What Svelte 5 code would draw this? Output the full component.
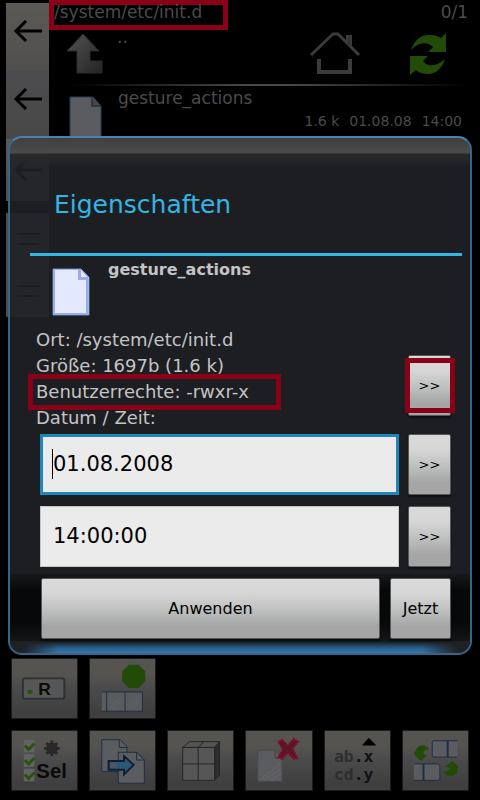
<script lang="ts">
	let date = '01.08.2008';
	let time = '14:00:00';

	const path = '/system/etc/init.d';
	const file = { name: 'gesture_actions', size: '1.6 k', date: '01.08.08', time: '14:00' };

	const sideButtons = ['back', 'back', 'back', 'menu', 'menu'];
	const checks = [9, 24, 39];
	const spokes = [0, 45, 90, 135];
</script>

<div class="app">
	<div class="top">
		<nav class="side">
			{#each sideButtons as kind}
				<button class="side-btn {kind}" aria-label={kind}>
					{#if kind === 'back'}
						<svg width="30" height="24" viewBox="0 0 30 24" fill="none" stroke="currentColor" stroke-width="3">
							<path d="M29 12H3M13 2L3 12l10 10"></path>
						</svg>
					{:else}
						<svg width="30" height="24" viewBox="0 0 30 24" fill="none" stroke="currentColor" stroke-width="2">
							<path d="M4 7h22M4 17h22"></path>
						</svg>
					{/if}
				</button>
			{/each}
		</nav>

		<main class="browser">
			<header class="status">
				<span class="path marked">{path}</span>
				<span class="count">0/1</span>
			</header>

			<div class="tools">
				<button class="plain up" aria-label="Nach oben">
					<svg width="38" height="42" viewBox="0 0 38 42">
						<defs>
							<linearGradient id="upFill" x1="0" y1="0" x2="1" y2="1">
								<stop offset="0" stop-color="#535353"></stop>
								<stop offset="1" stop-color="#242424"></stop>
							</linearGradient>
						</defs>
						<path d="M17 1L33 18H24V28H36V40H11V18H1Z" fill="url(#upFill)" stroke="#2c2c2c"></path>
					</svg>
					<span>..</span>
				</button>
				<button class="plain" aria-label="Home">
					<svg width="52" height="46" viewBox="0 0 52 46" fill="none" stroke="#3b3b3b" stroke-width="3">
						<path d="M2 24L24 3h5L50 24"></path>
						<path d="M38 12V5h4v12" fill="#333" stroke-width="2"></path>
						<path d="M10 28V41H41V28" stroke-width="4"></path>
					</svg>
				</button>
				<button class="plain" aria-label="Aktualisieren">
					<svg width="38" height="44" viewBox="0 0 38 44" fill="#234b08">
						<path d="M2 18C5 8 13 2 21 3C27 3 30 5 32 6L37 1V20H19L24 15C18 9 9 10 2 18Z"></path>
						<path d="M36 27C33 37 25 43 18 42C12 42 8 39 7 38L1 43V24H19L14 29C19 36 28 34 36 27Z"></path>
					</svg>
				</button>
			</div>

			<div class="rule"></div>

			<div class="entry">
				<svg width="34" height="50" viewBox="0 0 34 50">
					<path d="M1 1H24L32 10V49H1Z" fill="#5b5c60" stroke="#263d52"></path>
					<path d="M23 1V10H32" fill="#444549" stroke="#35363a" stroke-width="2"></path>
				</svg>
				<div class="entry-text">
					<span class="entry-name">{file.name}</span>
					<span class="entry-meta">
						<span>{file.size}</span>
						<span>{file.date}</span>
						<span>{file.time}</span>
					</span>
				</div>
			</div>
		</main>
	</div>

	<div class="actions">
		<button class="tile" aria-label="R">
			<svg viewBox="0 0 67 61">
				<rect x="11" y="20" width="43" height="21" rx="2" fill="#565656" stroke="#303030" stroke-width="2"></rect>
				<path d="M11 36V41H54" fill="none" stroke="#20344c"></path>
				<rect x="16" y="32" width="5" height="4" fill="#2a520c"></rect>
				<text x="27" y="37" class="letter">R</text>
			</svg>
		</button>
		<button class="tile" aria-label="Stopp">
			<svg viewBox="0 0 67 61">
				<path d="M40 6h10l7 7v10l-7 7H40l-7-7V13Z" fill="#234b08"></path>
				<path d="M12 34H54V54H12" fill="#5a5b5f" stroke="#1d2d42"></path>
				<path d="M17 34V54M36 34V54" stroke="#1d2d42"></path>
				<path d="M22 49l9-9M25 51l8-8M41 49l9-9M44 51l8-8" stroke="#747474" stroke-dasharray="1 2"></path>
			</svg>
		</button>
		<span class="break"></span>
		<button class="tile" aria-label="Auswahl">
			<svg viewBox="0 0 67 61">
				{#each checks as y}
					<rect x="12" {y} width="11" height="13" fill="#626262"></rect>
					<path d="M13 {y + 6}l4 4 6-6" fill="none" stroke="#2a520c" stroke-width="3"></path>
				{/each}
				<circle cx="41" cy="18" r="6" fill="#292929"></circle>
				{#each spokes as angle}
					<path d="M33 18H49" stroke="#292929" stroke-width="3" transform="rotate({angle} 41 18)"></path>
				{/each}
				<text x="25" y="49" class="sel">Sel</text>
			</svg>
		</button>
		<button class="tile" aria-label="Kopieren">
			<svg viewBox="0 0 67 61">
				<path d="M12 9H31L38 16V42H12Z" fill="#5b5c60" stroke="#1d2d42"></path>
				<path d="M30 9V17H38" fill="none" stroke="#1d2d42"></path>
				<path d="M29 22H48L56 30V54H29Z" fill="#5b5c60" stroke="#1d2d42"></path>
				<path d="M48 22V30H56" fill="none" stroke="#1d2d42"></path>
				<path d="M19 31H35V26L45 35L35 45V40H19Z" fill="#2c5876" stroke="#111f30" stroke-width="2"></path>
				<path d="M21 33h7v5h-7Z" fill="#50585f"></path>
			</svg>
		</button>
		<button class="tile" aria-label="Packen">
			<svg viewBox="0 0 67 61" stroke="#252525" stroke-linejoin="round">
				<path d="M48 17L53 11V46L48 51Z" fill="#2e2e2e"></path>
				<path d="M15 17L22 11H53L48 17Z" fill="#545454"></path>
				<path d="M15 17H48V51H15Z" fill="#565656"></path>
				<path d="M15 34H48M31 51V17L37 11M48 34l5-5" fill="none"></path>
			</svg>
		</button>
		<button class="tile" aria-label="Löschen">
			<svg viewBox="0 0 67 61">
				<path d="M12 20H30L37 28V52H12Z" fill="#5b5c60" stroke="#4b4b4d"></path>
				<path d="M30 20V28H37" fill="none" stroke="#404043"></path>
				<path d="M15 50L35 34M19 51L36 39M25 51L36 44" stroke="#777774" stroke-dasharray="1 2"></path>
				<path
					d="M33 11L37 9L43 15L49 8L54 11L48 18L53 28L49 29L43 23L37 29L33 27L38 19Z"
					fill="#5d1427"
					stroke="#80102a"
					stroke-width="2"
					stroke-dasharray="2 1"
				></path>
			</svg>
		</button>
		<button class="tile" aria-label="Umbenennen">
			<svg viewBox="0 0 67 61">
				<path d="M45 7L53 15H38Z" fill="#000"></path>
				<text x="9" y="32" class="rename">ab<tspan class="ext">.x</tspan></text>
				<text x="9" y="51" class="rename">cd<tspan class="ext">.y</tspan></text>
			</svg>
		</button>
		<button class="tile" aria-label="Tauschen">
			<svg viewBox="0 0 67 61">
				<path d="M56 10H31l-1 2V25l1 2H56" fill="#5b5c60" stroke="#1d2d42"></path>
				<path d="M46 10V27" stroke="#1d2d42" stroke-width="2"></path>
				<path d="M11 34H36l2 2V49l-2 2H11" fill="#5b5c60" stroke="#1d2d42"></path>
				<path d="M21 34V51" stroke="#1d2d42" stroke-width="2"></path>
				<path d="M27 20C25 14 18 13 14 18L12 22L11 21L12 25L18 31L25 25L21 24C21 20 24 18 27 20Z" fill="#234b08"></path>
				<path d="M41 41C43 48 52 48 56 43V38H58L51 31L43 37L48 38C48 41 44 43 41 41Z" fill="#234b08"></path>
			</svg>
		</button>
	</div>

	<div class="overlay">
		<form class="dialog" aria-labelledby="title" on:submit|preventDefault>
			<h1 id="title">Eigenschaften</h1>

			<div class="file">
				<svg width="38" height="48" viewBox="0 0 38 48">
					<path d="M1 1H29L37 9V47H1Z" fill="#e4e9ff" stroke="#5f88c0"></path>
					<path d="M2 2V46H35V9" fill="none" stroke="#9dabe6" stroke-width="2"></path>
					<path d="M26 1V12H36V8L29 1Z" fill="#9dabe6"></path>
					<path d="M29 2V9H35Z" fill="#e4e9ff"></path>
				</svg>
				<strong>{file.name}</strong>
			</div>

			<div class="info">
				<div class="lines">
					<p>Ort: {path}</p>
					<p>Größe: 1697b (1.6 k)</p>
					<p class="rights">Benutzerrechte: -rwxr-x</p>
					<p><label for="date">Datum / Zeit:</label></p>
				</div>
				<div class="rights-btn">
					<button type="button" class="btn small">&gt;&gt;</button>
				</div>
			</div>

			<div class="row">
				<div class="field">
					<input id="date" class="active" type="text" bind:value={date} />
					<span class="caret"></span>
				</div>
				<button type="button" class="btn small">&gt;&gt;</button>
			</div>
			<div class="row">
				<div class="field">
					<input type="text" aria-label="Zeit" bind:value={time} />
				</div>
				<button type="button" class="btn small">&gt;&gt;</button>
			</div>

			<div class="footer">
				<button type="submit" class="btn apply">Anwenden</button>
				<button type="button" class="btn now">Jetzt</button>
			</div>
		</form>
	</div>
</div>

<style>
	:global(body) {
		margin: 0;
		background: #000;
	}

	* {
		box-sizing: border-box;
	}

	button,
	input {
		font-family: inherit;
		margin: 0;
	}

	.app {
		position: relative;
		display: flex;
		flex-direction: column;
		justify-content: space-between;
		min-height: 100vh;
		background: #000;
		color: #4b4b4b;
		font-family: 'DejaVu Sans', Verdana, sans-serif;
		font-size: 17px;
	}

	.top {
		display: flex;
	}

	.side {
		display: flex;
		flex-direction: column;
		width: 43px;
		margin: 3px 0 0 6px;
	}

	.side-btn {
		display: flex;
		align-items: center;
		justify-content: center;
		height: 68px;
		padding: 0 0 12px;
		border: 0;
		background: linear-gradient(#5a5956, #504f4d);
		color: #000;
	}

	.side-btn:nth-child(2) {
		background: linear-gradient(#4c4c4e, #484848);
	}

	.side-btn:nth-child(3) {
		height: 62px;
		padding: 0;
		margin-bottom: 12px;
	}

	.side-btn.menu {
		height: 52px;
		padding: 0;
		background: #4c4c4c;
	}

	.browser {
		flex: 1;
		min-width: 0;
	}

	.status {
		display: flex;
		justify-content: space-between;
		padding-right: 12px;
		line-height: 24px;
	}

	.marked {
		height: 30px;
		padding-right: 21px;
		border: 5px solid #8a0016;
		line-height: 14px;
	}

	.tools {
		display: flex;
		align-items: center;
		justify-content: space-between;
		gap: 48px;
		height: 54px;
		padding: 0 33px 6px 17px;
	}

	.plain {
		display: flex;
		padding: 0;
		border: 0;
		background: none;
		color: inherit;
		font-size: 17px;
	}

	.plain.up {
		flex: 1;
		gap: 13px;
		line-height: 8px;
	}

	.rule {
		height: 2px;
		margin: 0 12px 0 20px;
		background: linear-gradient(90deg, #000, #4a4a4a 45%, #4a4a4a 55%, #000);
	}

	.entry {
		display: flex;
		gap: 15px;
		padding: 10px 18px 0 20px;
	}

	.entry-text {
		display: flex;
		flex: 1;
		flex-direction: column;
	}

	.entry-name {
		margin-top: -10px;
		line-height: 24px;
	}

	.entry-meta {
		display: flex;
		justify-content: flex-end;
		gap: 10px;
		font-size: 14px;
		line-height: 22px;
	}

	.actions {
		display: grid;
		grid-template-columns: repeat(6, 1fr);
		gap: 11px;
		padding: 0 11px 9px;
	}

	.break {
		grid-column: span 4;
	}

	.tile {
		height: 61px;
		padding: 0;
		border: 1px solid #1c1c1c;
		background: linear-gradient(#555450 0%, #555450 25%, #4a4a4c 50%, #3f3f3f 90%);
	}

	.tile svg {
		display: block;
		width: 100%;
		height: 100%;
	}

	.letter {
		font: bold 18px 'Liberation Sans', sans-serif;
		fill: #0a0a0a;
	}

	.sel {
		font: bold 21px 'Liberation Sans', sans-serif;
		fill: #0a0a0a;
	}

	.rename {
		font: bold 17px 'DejaVu Sans Mono', monospace;
		fill: #2e2e2e;
	}

	.ext {
		fill: #101214;
	}

	.overlay {
		position: absolute;
		inset: 0;
		display: flex;
		align-items: center;
		padding: 0 8px 10px;
	}

	.dialog {
		flex: 1;
		min-width: 0;
		border: 2px solid #36658c;
		border-top-color: #4c80b0;
		border-radius: 14px;
		background:
			linear-gradient(#424242e6, #4c4c4cf2 13px, #4c4c4cf2 15px, #2b2b2bdd 16px, #26272aaa 24px, #1e1f2300 29px),
			#202126e6;
		color: #c4c4c4;
		font-size: 18px;
		overflow: hidden;
	}

	h1 {
		margin: 0 8px 0 20px;
		padding: 52px 0 33px 24px;
		border-bottom: 3px solid #33b5e5;
		color: #33b5e5;
		font-size: 25px;
		font-weight: normal;
		line-height: 30px;
	}

	.file {
		display: flex;
		gap: 18px;
		padding: 12px 20px 11px 42px;
	}

	.file strong {
		margin-top: -10px;
		font-size: 16px;
		line-height: 24px;
	}

	.info {
		display: flex;
		align-items: flex-end;
		justify-content: space-between;
		margin-bottom: 3px;
		padding: 0 15px 0 18px;
	}

	.lines p {
		margin: 0;
		padding: 0 8px;
		line-height: 26px;
	}

	.lines .rights {
		margin: -5px 0;
		padding: 0 27px 0 3px;
		border: 5px solid #8a0016;
	}

	.rights-btn {
		position: relative;
		display: flex;
		padding: 0 4px 15px 0;
	}

	.rights-btn::after {
		content: '';
		position: absolute;
		inset: 3px 0 18px -3px;
		border: 5px solid #8a0016;
	}

	.row {
		display: flex;
		gap: 9px;
		padding: 0 19px 11px 30px;
	}

	.field {
		position: relative;
		flex: 1;
		min-width: 0;
	}

	input {
		display: block;
		width: 100%;
		height: 61px;
		padding: 0 12px;
		border: 1px solid #c6c6c6;
		border-radius: 0;
		background: #ebebeb;
		color: #000;
		font-size: 21px;
		outline: none;
	}

	input.active {
		padding: 0 10px;
		border: 3px solid #1f86ba;
	}

	.caret {
		position: absolute;
		top: 15px;
		left: 12px;
		width: 1px;
		height: 30px;
		background: #000;
	}

	.btn {
		height: 61px;
		padding: 0;
		border: 1px solid #55575a;
		border-radius: 2px;
		background: linear-gradient(#dadada 0%, #d6d6d6 25%, #b8b9b9 60%, #a5a5a5 80%);
		box-shadow: 0 2px 2px #0008;
		color: #000;
		font-size: 16px;
	}

	.btn.small {
		width: 43px;
		font-size: 13px;
	}

	.footer {
		display: flex;
		gap: 10px;
		margin-top: -4px;
		padding: 4px 19px 14px 31px;
		background:
			linear-gradient(90deg, #1f2022 12px, #1f202200 48px calc(100% - 48px), #1f2022 calc(100% - 12px)) bottom / 100% 12px
				no-repeat,
			linear-gradient(#0000, #2a5f8a 60%, #3579ad) bottom / 100% 12px no-repeat,
			linear-gradient(#17191b, #070809 20%, #070809 60%, #1b1d20);
	}

	.apply {
		flex: 1;
	}

	.now {
		width: 61px;
	}
</style>
